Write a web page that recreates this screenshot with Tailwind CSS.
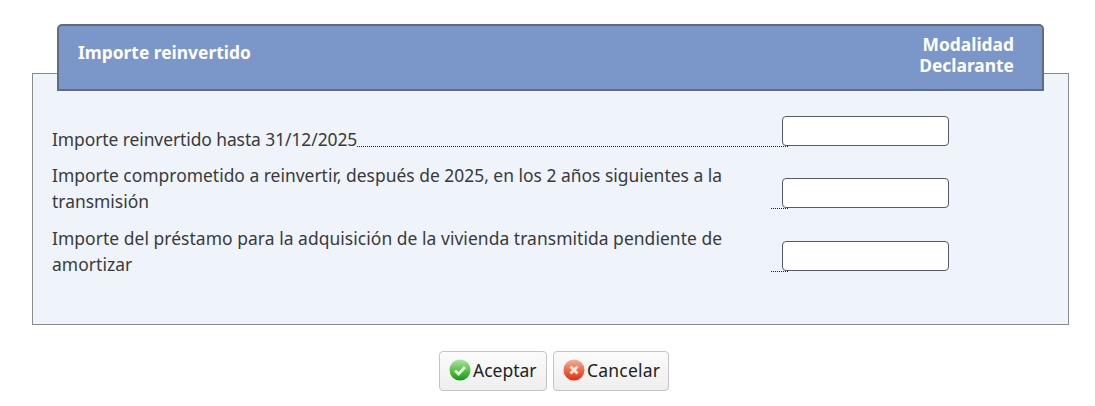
<!DOCTYPE html>
<html>
<head>
<meta charset="utf-8">
<script src="https://cdn.jsdelivr.net/npm/@tailwindcss/browser@4"></script>
</head>
<body class="bg-white font-['Noto_Sans',sans-serif] text-[#333]">
<div class="w-[1095px] h-[406px] overflow-hidden pt-6">
  <header class="relative z-10 ml-[57px] w-[987px] h-[67px] bg-[#7b96c8] border-2 border-[#646b7c] rounded-t-[5px] flex justify-between pl-[19px] pr-7 text-white font-bold text-[17.4px] leading-[21px]">
    <div class="pt-[16px]">Importe reinvertido</div>
    <div class="pt-[8px] text-right">Modalidad<br>Declarante</div>
  </header>
  <main class="mt-[-18px] ml-8 w-[1037px] h-[252px] bg-[#eff3fa] border border-[#8a8a8a] pl-[19px] pt-[41px] text-[17.45px] leading-[26px] text-[#3a3a3a]">
    <div class="flex items-end w-[897px] h-[32px]">
      <span class="mb-[-5px] whitespace-nowrap tracking-[-0.08px]">Importe reinvertido hasta 31/12/2025</span>
      <span class="flex-1 border-b border-dotted border-[#222]"></span>
      <input class="relative ml-[-6px] mb-px w-[167px] h-[30px] shrink-0 bg-white border border-[#555a66] rounded-[4px]">
    </div>
    <div class="flex items-end w-[897px] mt-[15px]">
      <span class="w-[719px] shrink-0 mb-[-5px]">Importe comprometido a reinvertir, después de 2025, en los 2 años siguientes a la transmisión</span>
      <span class="flex-1 border-b border-dotted border-[#222]"></span>
      <input class="relative ml-[-6px] mb-px w-[167px] h-[30px] shrink-0 bg-white border border-[#555a66] rounded-[4px]">
    </div>
    <div class="flex items-end w-[897px] mt-[16px]">
      <span class="w-[719px] shrink-0 mb-[-5px] tracking-[0.05px]">Importe del préstamo para la adquisición de la vivienda transmitida pendiente de amortizar</span>
      <span class="flex-1 border-b border-dotted border-[#222]"></span>
      <input class="relative ml-[-6px] mb-px w-[167px] h-[30px] shrink-0 bg-white border border-[#555a66] rounded-[4px]">
    </div>
  </main>
  <footer class="flex justify-start gap-[6px] ml-[439px] mt-[26px] text-[17.5px] text-[#222]">
    <button class="w-[108px] h-10 flex items-center gap-[2px] pl-[9px] pb-[2px] rounded-[4px] border border-[#c4c4c4] bg-gradient-to-b from-[#fbfbfb] to-[#eeeeee]">
      <svg width="22" height="22" viewBox="0 0 22 22" class="shrink-0"><defs><linearGradient id="g" x1="0" y1="0" x2="0" y2="1"><stop offset="0" stop-color="#b0e2a4"/><stop offset="0.5" stop-color="#5cc24c"/><stop offset="1" stop-color="#129a14"/></linearGradient></defs><circle cx="11" cy="11" r="10.5" fill="url(#g)"/><path d="M6 11.5l3.6 3.4L16 8" fill="none" stroke="#e6f2e0" stroke-width="3"/></svg>
      Aceptar
    </button>
    <button class="w-[116px] h-10 flex items-center gap-[2px] pl-[9px] pb-[2px] rounded-[4px] border border-[#c4c4c4] bg-gradient-to-b from-[#fbfbfb] to-[#eeeeee] tracking-[0.2px]">
      <svg width="22" height="22" viewBox="0 0 22 22" class="shrink-0"><defs><linearGradient id="r" x1="0" y1="0" x2="0" y2="1"><stop offset="0" stop-color="#f2b49a"/><stop offset="0.5" stop-color="#ee6a48"/><stop offset="1" stop-color="#e62a0e"/></linearGradient></defs><circle cx="11" cy="11" r="10.5" fill="url(#r)"/><path d="M7.5 7.5l7 7M14.5 7.5l-7 7" fill="none" stroke="#f6e6de" stroke-width="3"/></svg>
      Cancelar
    </button>
  </footer>
</div>
</body>
</html>
